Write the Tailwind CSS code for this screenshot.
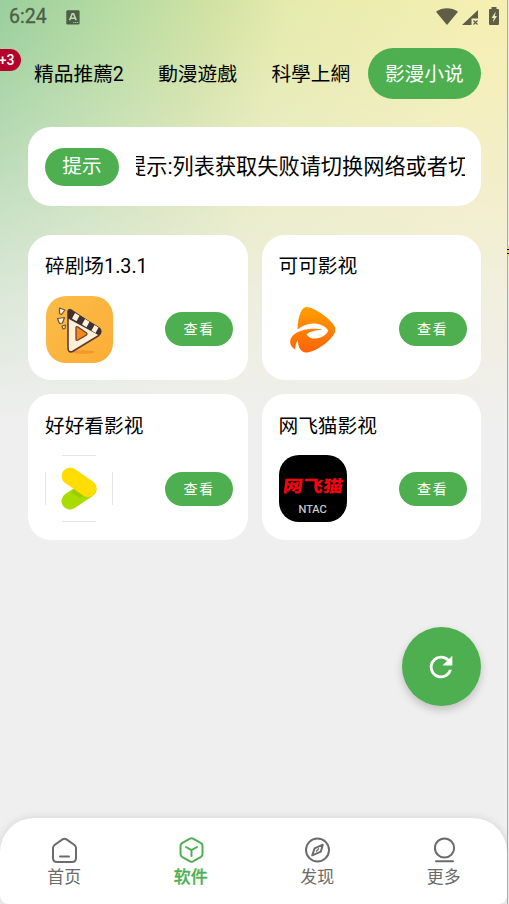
<!DOCTYPE html>
<html lang="zh-CN">
<head>
<meta charset="utf-8">
<title>软件</title>
<script src="https://cdn.jsdelivr.net/npm/@tailwindcss/browser@4"></script>
</head>
<body class="relative flex h-[904px] w-[509px] overflow-hidden bg-[#e9e9ea] font-['Roboto','Noto_Sans_CJK_SC',sans-serif] text-black">
<main class="relative flex h-[904px] w-[507px] shrink-0 flex-col overflow-hidden bg-[#efefef] bg-[linear-gradient(180deg,rgba(239,239,239,0)_0px,rgba(239,239,239,0.08)_50px,rgba(239,239,239,0.36)_170px,rgba(239,239,239,0.7)_290px,#efefef_425px),linear-gradient(102deg,#9acf9d_0px,#b9dca2_125px,#d1e2a3_210px,#e6ebad_285px,#f5efb2_480px,#f7edb3_600px)]">
  <header class="flex h-[34px] shrink-0 items-center pl-[9px] pr-[7px] text-[#4d6046]">
    <span class="w-[38px] text-[19.500px] leading-none [-webkit-text-stroke:0.3px_#4d6046]">6:24</span>
    <svg class="ml-[19px]" width="14" height="15" viewBox="0 0 14 15"><rect x="0.3" y="0.3" width="13.3" height="14.3" rx="1.3" fill="#4b5f48"/><path d="M3.6 10.3 6.2 3.8h1.4l2.6 6.5M4.7 8.3h4.4" fill="none" stroke="#c3dba8" stroke-width="1.6"/><path d="M7.3 12.5h1m1 0h1m1 0h1" stroke="#c3dba8"/></svg>
    <svg class="ml-auto" width="64" height="20" viewBox="0 0 64 20" fill="#5f5d46"><path d="M0 4.7C6.5.1 15.500.1 22 4.700L11 18z"/><path d="M42 3v8.500h-6.500v6.500H26z"/><path d="m37.500 13.500 4 4m0-4-4 4" stroke="#5f5d46" stroke-width="1.200"/><path d="M55.500 0h5v2H62q1 0 1 1v14q0 1-1 1h-8q-1 0-1-1V3q0-1 1-1h1.500z"/><path d="M59.800 4.500 55.500 11h2.300l-1 4.500 4.200-6.500h-2.200z" fill="#f1ebb2"/></svg>
  </header>
  <nav class="mt-[14px] flex h-[51px] shrink-0 items-center pl-[17px] text-[19.700px] leading-none">
    <div class="flex h-full w-[124px] items-center justify-center pt-[2px]">精品推薦2</div>
    <div class="flex h-full w-[113px] items-center justify-center pt-[2px]">動漫遊戲</div>
    <div class="flex h-full w-[113.500px] items-center justify-center pt-[2px]">科學上網</div>
    <div class="flex h-full w-[113.500px] items-center justify-center rounded-full bg-[#4daf50] pt-[2px] text-white">影漫小说</div>
  </nav>
  <span class="absolute left-[-12px] top-[49px] flex h-[22px] w-[33px] items-center justify-end rounded-full bg-[#b4022a] pr-[6.500px] text-[14px] font-medium text-white">+3</span>
  <section class="ml-[28px] mt-[28px] flex h-[79px] w-[453px] shrink-0 items-center rounded-[23px] bg-white pl-[17px] pr-[16.500px]">
    <span class="flex h-[38px] w-[74px] shrink-0 items-center justify-center rounded-full bg-[#4daf50] pt-[1px] text-[19.700px] leading-none text-white">提示</span>
    <div class="ml-[16.500px] flex h-[40px] flex-1 items-center overflow-hidden whitespace-nowrap text-[21.200px] leading-none"><span class="-ml-[10.500px]">提示:列表获取失败请切换网络或者切换</span></div>
  </section>
  <section class="ml-[28px] mt-[28.500px] grid w-[453px] shrink-0 grid-cols-2 gap-[14px]">
    <article class="h-[145.500px] rounded-[23px] bg-white pl-[17px] pr-[14.500px] pt-[17.500px]">
      <h2 class="h-[28px] text-[19.700px] leading-[29px]">碎剧场1.3.1</h2>
      <div class="mt-[15.500px] flex items-center justify-between">
        <svg class="ml-[1px]" width="67" height="67" viewBox="0 0 67 67">
          <defs><linearGradient id="gold" x2="1" y2="1"><stop stop-color="#fabd49"/><stop offset="1" stop-color="#fcad35"/></linearGradient></defs>
          <rect width="67" height="67" rx="20" fill="url(#gold)"/>
          <ellipse cx="37" cy="56" rx="12" ry="1.800" fill="#f09a27"/>
          <path d="M22 20v32q0 5 4.500 3.500L52 40q4-3 2-6L25 14q-2-1-3 1z" fill="#fff0d9" stroke="#64382a" stroke-width="1.600" stroke-linejoin="round"/>
          <path d="M22 14.500q1.500-2 4 0l27 16.500q4 3 1.500 7-2 2-4 0L22 22.500z" fill="#413030"/>
          <path d="m29 17-3 5.500 4.500 2.700 3-5.500zm10 6-3 5.500 4.500 2.700 3-5.500zm9.500 6-3 5.500 4 2.500 3-5.500z" fill="#fff0d9"/>
          <path d="M30 31.500q.3-1.500 2-.5l8.500 6q1 1 0 2l-8.500 5q-2 1-2-1z" fill="#f28a20" stroke="#76401f" stroke-width="1.300"/>
          <path d="m13.500 12 5.500 2-3.500 4.500-2-1zM11.500 22.500l7-1-2 5.500-3 .5zM16 30l3.500-1-.5 3.500-2 .5z" fill="#fff3e0" stroke="#76502f" stroke-width="1.200" stroke-linejoin="round"/>
        </svg>
        <button class="h-[34px] w-[68px] rounded-full bg-[#4daf50] pt-px text-[14.100px] leading-none tracking-[1.300px] text-white">查看</button>
      </div>
    </article>
    <article class="h-[145.500px] rounded-[23px] bg-white pl-[17px] pr-[14.500px] pt-[17.500px]">
      <h2 class="h-[28px] text-[19.700px] leading-[29px]">可可影视</h2>
      <div class="mt-[15.500px] flex items-center justify-between">
        <svg width="67" height="67" viewBox="0 0 67 67">
          <defs><linearGradient id="orange" x2="0" y2="1"><stop stop-color="#ffa000"/><stop offset="1" stop-color="#ff6300"/></linearGradient></defs>
          <path d="M18.500 33.500C19 20 22.500 11 27.500 11 34 11 48 20 54 28q4 5 1 10C50 47 34 57 27 56.500c-5 0-8.200-5-8-12.500-2.200 3-2.700 5.500-2.700 9.500-4.300-2.500-5.800-6-4.800-10 2-5.500 8-9 17-10.300 6-.8 11.500-.5 15 .600-6.500.200-13 2-16 4.700 3 4.500 9 5 14 3 4-1.500 6.700-4 7.700-7-4.200-6.300-12-8-19.200-6.500-5 1-8.500 3-11.500 5.500z" fill="url(#orange)"/>
        </svg>
        <button class="h-[34px] w-[68px] rounded-full bg-[#4daf50] pt-px text-[14.100px] leading-none tracking-[1.300px] text-white">查看</button>
      </div>
    </article>
    <article class="h-[145.500px] rounded-[23px] bg-white pl-[17px] pr-[14.500px] pt-[17.500px]">
      <h2 class="h-[28px] text-[19.700px] leading-[29px]">好好看影视</h2>
      <div class="mt-[15.500px] flex items-center justify-between">
        <svg width="68" height="67" viewBox="0 0 68 67">
          <path d="M17 .5h34M17 66.500h34M.5 17v33M67.500 17v33" stroke="#e5e5e5" fill="none"/>
          <path d="M25 46 43 34" stroke="#a9dc00" stroke-width="17" stroke-linecap="round"/>
          <path d="m26 38 3-4 10 7-4 2q-4-3-9-5z" fill="#85b900" opacity=".4"/>
          <path d="m25 21 18 12.500" stroke="#ffdd00" stroke-width="17" stroke-linecap="round"/>
        </svg>
        <button class="h-[34px] w-[68px] rounded-full bg-[#4daf50] pt-px text-[14.100px] leading-none tracking-[1.300px] text-white">查看</button>
      </div>
    </article>
    <article class="h-[145.500px] rounded-[23px] bg-white pl-[17px] pr-[14.500px] pt-[17.500px]">
      <h2 class="h-[28px] text-[19.700px] leading-[29px]">网飞猫影视</h2>
      <div class="mt-[15.500px] flex items-center justify-between">
        <div class="flex h-[67px] w-[68px] flex-col items-center rounded-[20px] bg-black pt-[22px]">
          <span class="h-[20px] -skew-x-6 scale-y-[0.82] whitespace-nowrap text-[20px] font-black leading-[19px] text-[#f20510]">网飞猫</span>
          <span class="mt-[6px] text-[11px] leading-[14px] text-[#d5d5d5] [-webkit-text-stroke:0.2px_#d5d5d5]">NTAC</span>
        </div>
        <button class="h-[34px] w-[68px] rounded-full bg-[#4daf50] pt-px text-[14.100px] leading-none tracking-[1.300px] text-white">查看</button>
      </div>
    </article>
  </section>
  <button class="absolute left-[401.500px] top-[627px] flex size-[79.200px] items-center justify-center rounded-full bg-[#4daf50] shadow-[0_4px_9px_rgba(0,0,0,0.2)]">
    <svg width="34" height="34" viewBox="0 0 24 24" fill="white"><path d="M17.650 6.350A7.958 7.958 0 0 0 12 4a8 8 0 1 0 7.730 10h-2.080A6 6 0 1 1 12 6c1.660 0 3.140.69 4.220 1.780L13 11h7V4z"/></svg>
  </button>
  <footer class="mt-auto grid h-[86px] shrink-0 grid-cols-4 rounded-b-[8px] rounded-t-[34px] bg-white pl-px text-[16.900px] text-[#6b6b6b] shadow-[0_0_9px_rgba(0,0,0,0.12)]">
    <div class="flex flex-col items-center pt-[18px]">
      <svg class="translate-x-[0.5px]" width="28" height="28" viewBox="0 0 28 28" fill="none" stroke="currentColor" stroke-width="2" stroke-linecap="round" stroke-linejoin="round"><path d="M12 3.400q2-1.500 4 0l8 5.600q1.500 1.200 1.500 3v10q0 4-4 4h-15q-4 0-4-4V12q0-1.800 1.500-3z"/><path d="M9.500 20.500h9"/></svg>
      <span class="leading-[26px]">首页</span>
    </div>
    <div class="flex flex-col items-center pt-[18px] font-medium text-[#4daf50]">
      <svg class="translate-x-[0.5px]" width="28" height="28" viewBox="0 0 28 28" fill="none" stroke="currentColor" stroke-width="2" stroke-linecap="round" stroke-linejoin="round"><path d="M12.500 2.700q1.500-.8 3 0l8 4.500q1.500 1 1.500 2.800v8q0 1.800-1.500 2.800l-8 4.500q-1.500.8-3 0l-8-4.500Q3 19.800 3 18v-8q0-1.800 1.500-2.800z"/><path d="m8.500 11 5.500 3.200 5.500-3.200M14 14.200V20"/></svg>
      <span class="leading-[26px] [-webkit-text-stroke:0.3px_#4daf50]">软件</span>
    </div>
    <div class="flex flex-col items-center pt-[18px]">
      <svg class="translate-x-[0.5px]" width="28" height="28" viewBox="0 0 28 28" fill="none" stroke="currentColor" stroke-width="2" stroke-linejoin="round"><circle cx="14" cy="14" r="11.500"/><path d="m19.300 8.700-2 7-8.500 3.600 2.300-7z"/><path d="m12.500 15.500 3-3" stroke-width="1.300"/></svg>
      <span class="leading-[26px]">发现</span>
    </div>
    <div class="flex flex-col items-center pt-[18px]">
      <svg class="translate-x-[0.5px]" width="28" height="28" viewBox="0 0 28 28" fill="none" stroke="currentColor" stroke-width="2" stroke-linecap="round"><circle cx="14" cy="12" r="9.600"/><path d="M5.500 25.300h17"/></svg>
      <span class="leading-[26px]">更多</span>
    </div>
  </footer>
</main>
<div class="h-full w-[1px] shrink-0 bg-[#aaaaac]"></div>
<div class="absolute left-[507px] top-[247px] h-[9px] w-[2px] bg-[#e9c56b] py-[2px]"><div class="h-[5px] border-y border-black"></div></div>
</body>
</html>
